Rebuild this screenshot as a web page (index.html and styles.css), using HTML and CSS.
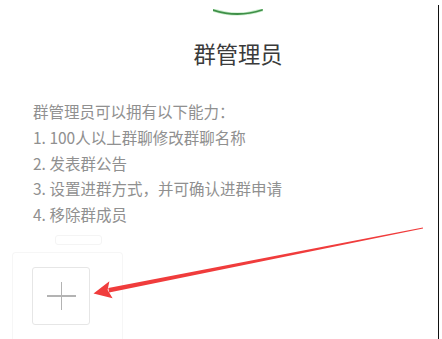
FILE: index.html
```html
<!DOCTYPE html>
<html lang="zh">
<head>
<meta charset="utf-8">
<title>群管理员</title>
<link rel="stylesheet" href="styles.css">
</head>
<body>
<div class="screen">
  <svg class="arc" width="50" height="8" viewBox="0 0 50 8">
    <path d="M0,1 Q24.5,9 49,1" fill="none" stroke="#9fe0a4" stroke-width="3.2" stroke-linecap="round" opacity="0.6"/>
    <path d="M0,1 Q24.5,9 49,1" fill="none" stroke="#3f8f48" stroke-width="1.8" stroke-linecap="round"/>
  </svg>
  <h1 class="title">群管理员</h1>
  <div class="list">
    <p>群管理员可以拥有以下能力：</p>
    <p>1. 100人以上群聊修改群聊名称</p>
    <p>2. 发表群公告</p>
    <p>3. 设置进群方式，并可确认进群申请</p>
    <p>4. 移除群成员</p>
  </div>
  <div class="members">
    <div class="tab"></div>
    <div class="frame">
      <div class="add-box"><span class="plus"></span></div>
    </div>
  </div>
</div>
<svg class="arrow" width="442" height="339" viewBox="0 0 442 339">
  <polygon points="423.1,228.6 422.9,227.4 108.3,287.9 109.1,292.6" fill="#f03c3c"/>
  <polygon points="93.5,293.4 109.4,281.3 107.6,290 112.6,298.2" fill="#f03c3c"/>
</svg>
</body>
</html>
```
FILE: styles.css
```css
html, body {
  margin: 0;
  padding: 0;
  background: #ffffff;
}
body {
  width: 442px;
  height: 339px;
  overflow: hidden;
  position: relative;
  font-family: "Noto Sans CJK SC", "Noto Sans", sans-serif;
}
.screen {
  margin-top: 5px;
  width: 439px;
  height: 334px;
  box-sizing: border-box;
  border-right: 1.5px solid #111;
  overflow: hidden;
}
.arc {
  display: block;
  margin: 4px 0 0 213px;
}
.title {
  margin: 21px 0 0 0;
  padding-left: 38px;
  text-align: center;
  font-size: 22.3px;
  font-weight: 400;
  line-height: 30px;
  color: #3a3a3a;
}
.list {
  margin-top: 31px;
  padding-left: 33px;
}
.list p {
  margin: 0;
  font-size: 15.5px;
  line-height: 25.75px;
  color: #909090;
  white-space: nowrap;
}
.members {
  margin-top: 7px;
  padding-left: 12px;
}
.tab {
  margin-left: 43px;
  width: 47px;
  height: 10px;
  box-sizing: border-box;
  border: 1px solid #f4f4f4;
  border-radius: 3px;
}
.frame {
  margin-top: 7px;
  width: 111px;
  height: 90px;
  box-sizing: border-box;
  border: 1px solid #f6f6f6;
  border-bottom: none;
  border-radius: 4px 4px 0 0;
  padding: 14px 0 0 19px;
}
.add-box {
  width: 58px;
  height: 58px;
  box-sizing: border-box;
  border: 1px solid #e6e6e6;
  border-radius: 3px;
  display: flex;
  align-items: center;
  justify-content: center;
}
.plus {
  position: relative;
  width: 29px;
  height: 28px;
  display: block;
}
.plus::before,
.plus::after {
  content: "";
  position: absolute;
  background: #b3b3b3;
}
.plus::before {
  left: 0;
  right: 0;
  top: 13.5px;
  height: 1.5px;
}
.plus::after {
  top: 0;
  bottom: 0;
  left: 14px;
  width: 1.5px;
}
.arrow {
  position: absolute;
  left: 0;
  top: 0;
  pointer-events: none;
}
```
